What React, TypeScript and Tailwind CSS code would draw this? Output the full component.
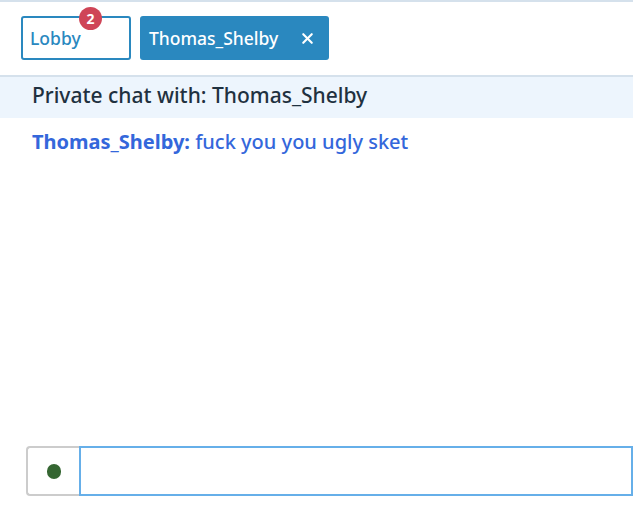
import { X } from 'lucide-react';

export default function App() {
  return (
    <div className="flex h-[509px] w-[633px] flex-col overflow-hidden bg-white font-['Noto_Sans',sans-serif] font-medium">
      <div className="flex h-[77px] items-start gap-[9px] border-y-2 border-[#d5e1ec] pl-[21px] pt-[14px]">
        <div className="relative flex h-[44px] w-[110px] items-center rounded-[3px] border-2 border-[#2a88bf] pl-[7px] text-[17.5px] text-[#2a88bf]">
          Lobby
          <span className="absolute left-[56px] top-[-11px] flex h-[23px] w-[23px] items-center justify-center rounded-full bg-[#cf4557] text-[14px] font-bold leading-none text-white">
            2
          </span>
        </div>
        <div className="flex h-[44px] w-[189px] items-center justify-between rounded-[3px] bg-[#2a88bf] pl-[9px] pr-[13px] text-[17.5px] text-white">
          <span>Thomas_Shelby</span>
          <X className="h-[17px] w-[17px]" strokeWidth={3} />
        </div>
      </div>

      <div className="flex h-[41px] items-center bg-[#edf5fd] pb-[3px] pl-[32px] text-[21px] text-[#1f3140]">
        Private chat with: Thomas_Shelby
      </div>

      <div className="mt-[10px] pl-[32px] text-[20px] leading-[28px] text-[#3467db]">
        <span className="font-bold">Thomas_Shelby:</span> fuck you you ugly sket
      </div>

      <div className="flex-1" />

      <div className="mb-[13px] flex h-[50px] pl-[26px]">
        <div className="flex w-[53px] items-center justify-center rounded-l-[4px] border-2 border-r-0 border-[#cccccc] bg-white">
          <span className="h-[15px] w-[14px] rounded-full bg-[#356632]" />
        </div>
        <input
          className="h-full flex-1 border-2 border-[#66afe9] bg-white px-3 text-[18px] outline-none"
          type="text"
        />
      </div>
    </div>
  );
}
